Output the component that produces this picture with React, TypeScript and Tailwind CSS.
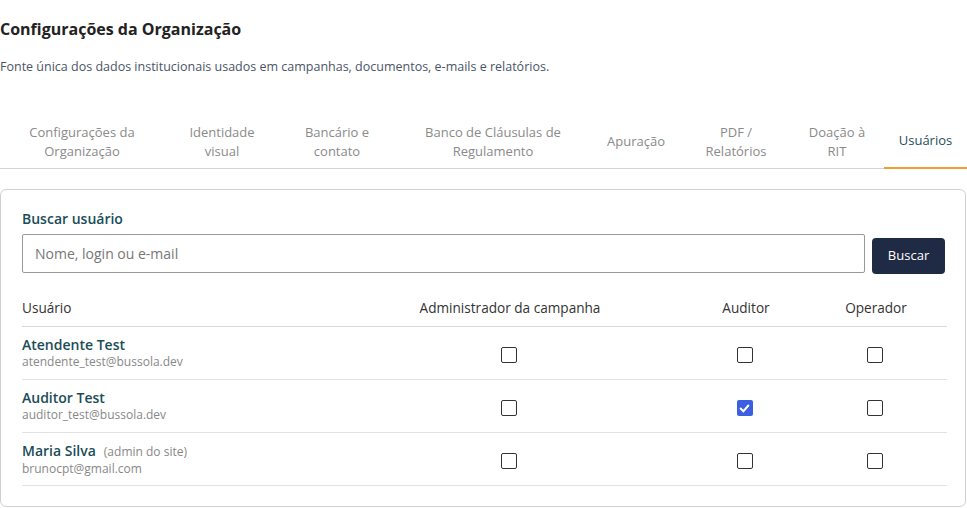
import React from "react";

const tabs: { lines: string[]; w: string; active?: boolean }[] = [
  { lines: ["Configurações da", "Organização"], w: "w-[164px]" },
  { lines: ["Identidade", "visual"], w: "w-[116px]" },
  { lines: ["Bancário e", "contato"], w: "w-[114px]" },
  { lines: ["Banco de Cláusulas de", "Regulamento"], w: "w-[198px]" },
  { lines: ["Apuração"], w: "w-[88px]" },
  { lines: ["PDF /", "Relatórios"], w: "w-[112px]" },
  { lines: ["Doação à", "RIT"], w: "w-[90px]" },
  { lines: ["Usuários"], w: "w-[83px]", active: true },
];

const users = [
  { name: "Atendente Test", email: "atendente_test@bussola.dev", tag: "", roles: [false, false, false] },
  { name: "Auditor Test", email: "auditor_test@bussola.dev", tag: "", roles: [false, true, false] },
  { name: "Maria Silva", email: "brunocpt@gmail.com", tag: "(admin do site)", roles: [false, false, false] },
];

function Box({ checked }: { checked: boolean }) {
  if (checked) {
    return (
      <div className="w-4 h-4 rounded-[2px] bg-[#3b5fe0] flex items-center justify-center">
        <svg width="11" height="11" viewBox="0 0 12 12" fill="none">
          <path d="M2 6.3 L4.8 9 L10 3" stroke="white" strokeWidth="2.2" strokeLinecap="square" />
        </svg>
      </div>
    );
  }
  return <div className="w-4 h-4 rounded-[2px] border border-[#333] bg-white" />;
}

export default function App() {
  return (
    <div className="w-[967px] h-[508px] overflow-hidden bg-white text-[#222]" style={{ fontFamily: '"Open Sans", "Noto Sans", sans-serif' }}>
      <div className="pt-[19px]">
        <h1 className="text-[16px] font-bold leading-[20px] text-[#222]">Configurações da Organização</h1>
        <p className="mt-[19px] text-[12.5px] leading-[18px] text-[#4a5568]">
          Fonte única dos dados institucionais usados em campanhas, documentos, e-mails e relatórios.
        </p>
      </div>
      <div className="mt-[38px] flex border-b border-[#d4d4d4] h-[55px]">
        {tabs.map((t, i) => (
          <div
            key={i}
            className={`${t.w} shrink-0 flex flex-col items-center justify-center text-center text-[13px] leading-[19px] -mb-px ${
              t.active ? "text-[#1f4e5a] border-b-2 border-[#f0a030] ml-[2px]" : "text-[#8a8a8a]"
            }`}
          >
            {t.lines.map((l, j) => (
              <span key={j} className="whitespace-nowrap">{l}</span>
            ))}
          </div>
        ))}
      </div>
      <div className="mt-[20px] w-[966px] border border-[#d0d0d0] rounded-[6px] pl-[21px] pr-[20px] pt-[20px] pb-[20px]">
        <div className="text-[14px] font-semibold leading-[18px] text-[#1a4d57]">Buscar usuário</div>
        <div className="mt-[6px] flex items-start gap-[7px]">
          <div className="w-[844px] h-[39px] border border-[#999] rounded-[2px] flex items-center pl-[12px] text-[14px] text-[#777]">
            Nome, login ou e-mail
          </div>
          <button className="w-[73px] h-[36px] mt-[4px] rounded-[4px] bg-[#1f2a44] text-white text-[13px]">Buscar</button>
        </div>
        <div className="mt-[17px] w-[925px]">
          <div className="grid grid-cols-[311px_354px_118px_142px] h-[36px] items-center border-b border-[#d9d9d9] text-[13.6px] font-medium text-[#333]">
            <div>Usuário</div>
            <div className="text-center">Administrador da campanha</div>
            <div className="text-center">Auditor</div>
            <div className="text-center">Operador</div>
          </div>
          {users.map((u, i) => (
            <div key={i} className="grid grid-cols-[311px_354px_118px_142px] h-[53px] items-center border-b border-[#e2e2e2]">
              <div className="flex flex-col">
                <div className="flex items-baseline">
                  <span className="text-[14px] font-semibold leading-[18px] text-[#1a4d57]">{u.name}</span>
                  {u.tag && <span className="ml-[8px] text-[12px] text-[#888]">{u.tag}</span>}
                </div>
                <span className="text-[12px] leading-[16px] text-[#888]">{u.email}</span>
              </div>
              {u.roles.map((r, j) => (
                <div key={j} className="flex justify-center pr-[3px] pt-[4px]">
                  <Box checked={r} />
                </div>
              ))}
            </div>
          ))}
        </div>
      </div>
    </div>
  );
}
